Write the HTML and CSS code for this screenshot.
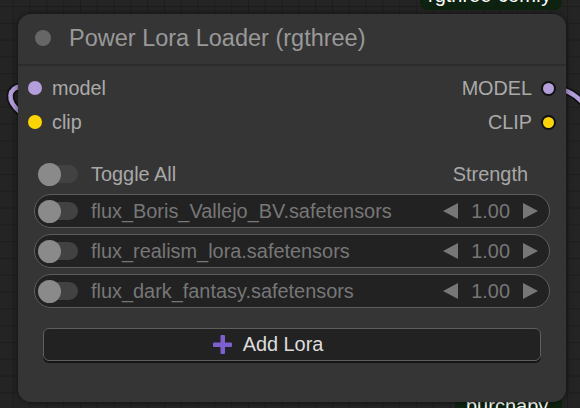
FILE: index.html
```html
<!DOCTYPE html>
<html>
<head>
<meta charset="utf-8">
<link rel="stylesheet" href="styles.css">
</head>
<body>
<div class="canvas">
  <svg class="links" width="580" height="408" viewBox="0 0 580 408">
    <path class="link-edge" d="M22 86 C8 88 6 100 20 112"/>
    <path class="link-model" d="M22 86 C8 88 6 100 20 112"/>
    <path class="link-edge" d="M556 89 C566 89 576 95 584 104"/>
    <path class="link-model" d="M556 89 C566 89 576 95 584 104"/>
  </svg>
  <div class="badge badge-top">rgthree-comfy</div>
  <div class="badge badge-bottom">purchaby</div>

  <div class="node">
    <div class="title">
      <span class="title-dot"></span>
      <span class="title-text">Power Lora Loader (rgthree)</span>
    </div>
    <div class="slots">
      <div class="slot-row">
        <div class="slot-in"><span class="dot dot-model"></span>model</div>
        <div class="slot-out">MODEL<span class="dot dot-model dot-linked"></span></div>
      </div>
      <div class="slot-row">
        <div class="slot-in"><span class="dot dot-clip"></span>clip</div>
        <div class="slot-out">CLIP<span class="dot dot-clip dot-linked"></span></div>
      </div>
    </div>
    <div class="widgets">
      <div class="header-row">
        <span class="toggle"><span class="knob"></span></span>
        <span class="header-label">Toggle All</span>
        <span class="header-strength">Strength</span>
      </div>
      <div class="lora">
        <span class="toggle"><span class="knob"></span></span>
        <span class="lora-name">flux_Boris_Vallejo_BV.safetensors</span>
        <svg class="arrow" width="15" height="16" viewBox="0 0 15 16"><polygon points="15,0 15,16 0,8"/></svg>
        <span class="lora-value">1.00</span>
        <svg class="arrow" width="15" height="16" viewBox="0 0 15 16"><polygon points="0,0 0,16 15,8"/></svg>
      </div>
      <div class="lora">
        <span class="toggle"><span class="knob"></span></span>
        <span class="lora-name">flux_realism_lora.safetensors</span>
        <svg class="arrow" width="15" height="16" viewBox="0 0 15 16"><polygon points="15,0 15,16 0,8"/></svg>
        <span class="lora-value">1.00</span>
        <svg class="arrow" width="15" height="16" viewBox="0 0 15 16"><polygon points="0,0 0,16 15,8"/></svg>
      </div>
      <div class="lora">
        <span class="toggle"><span class="knob"></span></span>
        <span class="lora-name">flux_dark_fantasy.safetensors</span>
        <svg class="arrow" width="15" height="16" viewBox="0 0 15 16"><polygon points="15,0 15,16 0,8"/></svg>
        <span class="lora-value">1.00</span>
        <svg class="arrow" width="15" height="16" viewBox="0 0 15 16"><polygon points="0,0 0,16 15,8"/></svg>
      </div>
      <div class="add-btn">
        <svg class="plus" width="19" height="19" viewBox="0 0 19 19">
          <rect x="7.5" y="0" width="4.5" height="19" rx="1"/>
          <rect x="0" y="7.5" width="19" height="4.5" rx="1"/>
        </svg>
        <span class="add-label">Add Lora</span>
      </div>
    </div>
  </div>
</div>
</body>
</html>
```
FILE: styles.css
```css
* { box-sizing: border-box; }

body {
  margin: 0;
  background: #232323;
  font-family: "Liberation Sans", Arial, sans-serif;
}

.canvas {
  position: relative;
  width: 580px;
  height: 408px;
  overflow: hidden;
  background-color: #242424;
  background-image:
    linear-gradient(#1d1d1d 1px, transparent 1px),
    linear-gradient(90deg, #1d1d1d 1px, transparent 1px);
  background-size: 16.8px 16.8px;
  background-position: -4px 6px;
}

.links {
  position: absolute;
  left: 0;
  top: 0;
}

.link-edge {
  fill: none;
  stroke: #111;
  stroke-width: 8;
}

.link-model {
  fill: none;
  stroke: #b39ddb;
  stroke-width: 4.5;
}

.badge {
  position: absolute;
  background: #0d2310;
  color: #ffffff;
  font-size: 20px;
  white-space: nowrap;
  border-radius: 8px;
}

.badge-top {
  left: 420px;
  top: -22px;
  width: 142px;
  height: 32px;
  padding: 6px 0 0 8px;
}

.badge-bottom {
  left: 455px;
  top: 393px;
  width: 107px;
  height: 30px;
  padding: 2px 0 0 11px;
}

.node {
  position: absolute;
  left: 18px;
  top: 14px;
  width: 548px;
  height: 388px;
  background: #353535;
  border-radius: 13px;
  box-shadow: 0 0 6px rgba(0, 0, 0, 0.55);
}

.title {
  height: 52px;
  display: flex;
  align-items: center;
  padding-left: 17px;
  padding-bottom: 2px;
  border-bottom: 2px solid #2c2c2c;
}

.title-dot {
  width: 16px;
  height: 16px;
  border-radius: 50%;
  background: #666;
  margin-right: 18px;
}

.title-text {
  font-size: 23.5px;
  color: #999;
}

.slots {
  padding-top: 5px;
}

.slot-row {
  height: 34px;
  display: flex;
  align-items: center;
  justify-content: space-between;
  font-size: 19.8px;
  color: #aaa;
}

.slot-in {
  display: flex;
  align-items: center;
  padding-left: 10px;
}

.slot-in .dot {
  margin-right: 10px;
}

.slot-out {
  display: flex;
  align-items: center;
  padding-right: 10px;
}

.slot-out .dot {
  margin-left: 9px;
}

.dot {
  width: 14px;
  height: 14px;
  border-radius: 50%;
}

.dot-model { background: #b39ddb; }
.dot-clip { background: #ffd500; }

.dot-linked {
  width: 15px;
  height: 15px;
  border: 2px solid #111;
}

.widgets {
  padding: 19px 16px 0 16px;
  display: flex;
  flex-direction: column;
}

.header-row {
  height: 32px;
  display: flex;
  align-items: center;
  padding-left: 4px;
  padding-right: 22px;
  font-size: 19.9px;
  color: #a8a8a8;
  margin-bottom: 4px;
}

.header-label {
  flex: 1;
  margin-left: 13px;
}

.toggle {
  position: relative;
  width: 40px;
  height: 23px;
  display: flex;
  align-items: center;
  flex: none;
}

.toggle::before {
  content: "";
  width: 40px;
  height: 18px;
  border-radius: 9px;
  background: #424242;
}

.knob {
  position: absolute;
  left: 0;
  top: 0;
  width: 23px;
  height: 23px;
  border-radius: 50%;
  background: #8a8a8a;
}

.lora {
  height: 34px;
  margin-bottom: 6px;
  display: flex;
  align-items: center;
  padding-left: 3px;
  padding-right: 11px;
  border: 1.5px solid #5c5c5c;
  border-radius: 17px;
  background: #222;
  font-size: 19.9px;
  color: #777;
}

.lora-name {
  flex: 1;
  margin-left: 13px;
  white-space: nowrap;
}

.arrow {
  fill: #777;
  flex: none;
}

.lora-value {
  margin: 0 13px 0 13px;
}

.add-btn {
  margin: 14px 9px 0 9px;
  height: 33px;
  display: flex;
  align-items: center;
  justify-content: center;
  padding-right: 48px;
  background: #222;
  border: 1.5px solid #5e5e5e;
  border-radius: 6px;
  box-shadow: 0 2px 0 #151515;
}

.plus {
  fill: #7c5fd0;
  margin-right: 11px;
}

.add-label {
  font-size: 19.9px;
  color: #ddd;
}
```
